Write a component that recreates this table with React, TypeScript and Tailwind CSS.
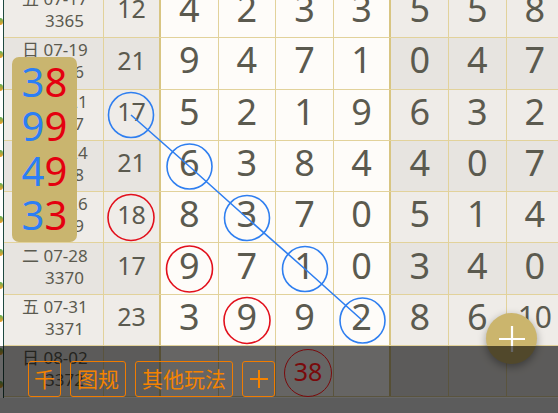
import React from "react";

const rows = [
  { wd: "五", d: "07-17", n: "3365", s: "12", v: ["4", "2", "3", "3", "5", "5", "8"] },
  { wd: "日", d: "07-19", n: "3366", s: "21", v: ["9", "4", "7", "1", "0", "4", "7"] },
  { wd: "二", d: "07-21", n: "3367", s: "17", v: ["5", "2", "1", "9", "6", "3", "2"] },
  { wd: "五", d: "07-24", n: "3368", s: "21", v: ["6", "3", "8", "4", "4", "0", "7"] },
  { wd: "日", d: "07-26", n: "3369", s: "18", v: ["8", "3", "7", "0", "5", "1", "4"] },
  { wd: "二", d: "07-28", n: "3370", s: "17", v: ["9", "7", "1", "0", "3", "4", "0"] },
  { wd: "五", d: "07-31", n: "3371", s: "23", v: ["3", "9", "9", "2", "8", "6", "10"] },
  { wd: "日", d: "08-02", n: "3372", s: "", v: ["", "", "", "", "", "", ""] },
];

const pairs = [
  ["3", "8"],
  ["9", "9"],
  ["4", "9"],
  ["3", "3"],
];

const blue = [
  [131, 115],
  [189.5, 166.5],
  [247, 218],
  [305, 269],
  [362.5, 320.5],
];
const red = [
  [131, 217.5],
  [189.5, 269],
  [247, 320.5],
];

const font = { fontFamily: '"Noto Sans", "Noto Sans CJK SC", sans-serif' };

export default function App() {
  return (
    <div className="relative w-[558px] h-[413px] overflow-hidden bg-white text-[#5b5a4f]" style={font}>
      <div className="flex h-full">
        {/* left strip */}
        <div className="w-[4px] shrink-0 flex flex-col items-start pt-[18px] gap-[26px] border-r border-[#1f4a40]">
          {Array.from({ length: 12 }).map((_, i) => (
            <div key={i} className="w-[3px] h-[7px] bg-gradient-to-b from-[#4caf50] to-[#f29a1f] rounded-r-sm" />
          ))}
        </div>

        {/* table */}
        <div className="-mt-[13px] flex flex-col">
          {rows.map((r, i) => {
            const odd = i % 2 === 1;
            const side = odd ? "bg-[#e7e4e0]" : "bg-[#efece8]";
            return (
              <div key={i} className="flex h-[51.3px] shrink-0 border-b border-[#e2d29b]">
                <div className={`w-[100px] shrink-0 flex flex-col justify-center pb-[4px] text-[17px] leading-[22px] border-r border-[#e2d29b] ${side}`}>
                  <div className="pl-[18px] whitespace-nowrap">
                    {r.wd} {r.d}
                  </div>
                  <div className="pl-[41px]">{r.n}</div>
                </div>
                <div className={`w-[57px] shrink-0 flex items-center justify-center pb-[6px] text-[25px] border-r-2 border-[#d8c582] ${side}`}>
                  {r.s}
                </div>
                {r.v.map((x, j) => (
                  <div
                    key={j}
                    className={`w-[57.6px] shrink-0 flex items-center justify-center pb-[6px] ${
                      x === "10" ? "text-[30px]" : "text-[36px]"
                    } ${j === 3 ? "border-r-2 border-[#d8c582]" : "border-r border-[#e2d29b]"} ${
                      j < 4 ? "bg-[#fefcf9]" : side
                    }`}
                  >
                    {x}
                  </div>
                ))}
              </div>
            );
          })}
        </div>
      </div>

      {/* circles and trend line */}
      <svg className="absolute left-0 top-0 pointer-events-none" width="558" height="413">
        <polyline
          points={blue.map((p) => p.join(",")).join(" ")}
          fill="none"
          stroke="#2f7ff0"
          strokeWidth="1.6"
        />
        {blue.map(([x, y], i) => (
          <circle key={i} cx={x} cy={y} r="22.5" fill="none" stroke="#2f7ff0" strokeWidth="1.6" />
        ))}
        {red.map(([x, y], i) => (
          <circle key={i} cx={x} cy={y} r="23" fill="none" stroke="#e2101c" strokeWidth="1.6" />
        ))}
      </svg>

      {/* number card */}
      <div className="absolute left-[12px] top-[57px] w-[65px] h-[185px] rounded-[7px] bg-[#c9b56f] flex flex-col items-center justify-center text-[40px] leading-[44.5px] pb-[2px]">
        {pairs.map(([a, b], i) => (
          <div key={i} className="flex">
            <span className="text-[#2b7ef5]">{a}</span>
            <span className="text-[#e4000f]">{b}</span>
          </div>
        ))}
      </div>

      {/* floating button */}
      <div className="absolute left-[486px] top-[313px] w-[51px] h-[51px] rounded-full bg-[#cbb56d] shadow-[0_3px_8px_rgba(0,0,0,0.35)] flex items-center justify-center">
        <svg width="28" height="28" viewBox="0 0 28 28">
          <path d="M1 14h26M14 1v26" stroke="#fff" strokeWidth="2.2" />
        </svg>
      </div>

      {/* bottom toolbar */}
      <div className="absolute left-0 bottom-0 w-full h-[67px] flex flex-col">
        <div className="h-[52px] bg-black/60 flex items-start gap-[9px] pl-[28px] pt-[15px]">
          <button className="h-[36px] px-[5px] border border-[#f07c00] rounded-[3px] text-[#f58300] text-[21px] leading-none">千</button>
          <button className="h-[36px] px-[6px] border border-[#f07c00] rounded-[3px] text-[#f58300] text-[21px] leading-none">图规</button>
          <button className="h-[36px] px-[6px] border border-[#f07c00] rounded-[3px] text-[#f58300] text-[21px] leading-none">其他玩法</button>
          <button className="h-[36px] w-[33px] border border-[#f07c00] rounded-[3px] flex items-center justify-center">
            <svg width="20" height="20" viewBox="0 0 20 20">
              <path d="M1 10h18M10 1v18" stroke="#f58300" strokeWidth="2" />
            </svg>
          </button>
          <div className="-mt-[12px] w-[48px] h-[48px] rounded-full border-[1.5px] border-[#7a0a0c] flex items-center justify-center text-[25px] text-[#7a0a0c] pb-[2px]">
            38
          </div>
        </div>
        <div className="flex-1 bg-[#5c5c5c]" />
      </div>
    </div>
  );
}
